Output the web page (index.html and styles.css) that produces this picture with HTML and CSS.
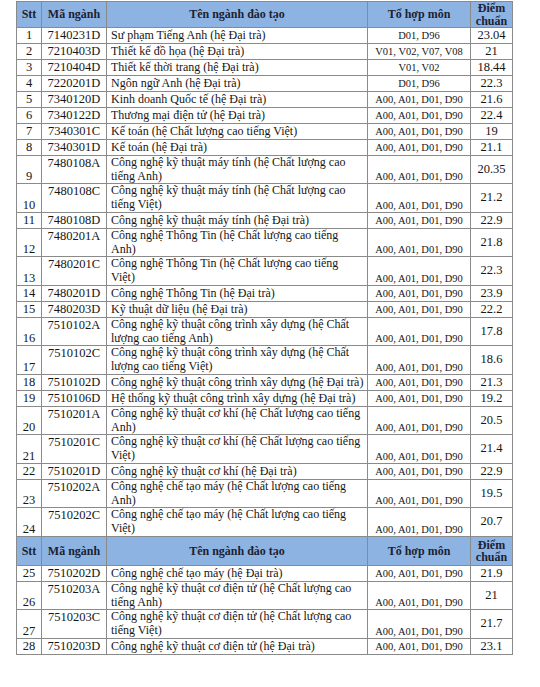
FILE: index.html
```html
<!DOCTYPE html>
<html lang="vi">
<head>
<meta charset="utf-8">
<title>Điểm chuẩn</title>
<link rel="stylesheet" href="styles.css">
</head>
<body>
<div class="wrap">
<table class="tbl">
<colgroup>
<col class="c-stt"><col class="c-code"><col class="c-name"><col class="c-combo"><col class="c-score">
</colgroup>
<tbody>
<tr class="h h1"><th>Stt</th><th>Mã ngành</th><th>Tên ngành đào tạo</th><th>Tổ hợp môn</th><th>Điểm<br>chuẩn</th></tr>
<tr class="s r1"><td class="stt">1</td><td class="code">7140231D</td><td class="name">Sư phạm Tiếng Anh (hệ Đại trà)</td><td class="combo">D01, D96</td><td class="score">23.04</td></tr>
<tr class="s"><td class="stt">2</td><td class="code">7210403D</td><td class="name">Thiết kế đồ họa (hệ Đại trà)</td><td class="combo">V01, V02, V07, V08</td><td class="score">21</td></tr>
<tr class="s"><td class="stt">3</td><td class="code">7210404D</td><td class="name">Thiết kế thời trang (hệ Đại trà)</td><td class="combo">V01, V02</td><td class="score">18.44</td></tr>
<tr class="s"><td class="stt">4</td><td class="code">7220201D</td><td class="name">Ngôn ngữ Anh (hệ Đại trà)</td><td class="combo">D01, D96</td><td class="score">22.3</td></tr>
<tr class="s"><td class="stt">5</td><td class="code">7340120D</td><td class="name">Kinh doanh Quốc tế (hệ Đại trà)</td><td class="combo">A00, A01, D01, D90</td><td class="score">21.6</td></tr>
<tr class="s"><td class="stt">6</td><td class="code">7340122D</td><td class="name">Thương mại điện tử (hệ Đại trà)</td><td class="combo">A00, A01, D01, D90</td><td class="score">22.4</td></tr>
<tr class="s"><td class="stt">7</td><td class="code">7340301C</td><td class="name">Kế toán (hệ Chất lượng cao tiếng Việt)</td><td class="combo">A00, A01, D01, D90</td><td class="score">19</td></tr>
<tr class="s"><td class="stt">8</td><td class="code">7340301D</td><td class="name">Kế toán (hệ Đại trà)</td><td class="combo">A00, A01, D01, D90</td><td class="score">21.1</td></tr>
<tr class="d da"><td class="stt">9</td><td class="code">7480108A</td><td class="name">Công nghệ kỹ thuật máy tính (hệ Chất lượng cao<br>tiếng Anh)</td><td class="combo">A00, A01, D01, D90</td><td class="score">20.35</td></tr>
<tr class="d db"><td class="stt">10</td><td class="code">7480108C</td><td class="name">Công nghệ kỹ thuật máy tính (hệ Chất lượng cao<br>tiếng Việt)</td><td class="combo">A00, A01, D01, D90</td><td class="score">21.2</td></tr>
<tr class="s"><td class="stt">11</td><td class="code">7480108D</td><td class="name">Công nghệ kỹ thuật máy tính (hệ Đại trà)</td><td class="combo">A00, A01, D01, D90</td><td class="score">22.9</td></tr>
<tr class="d da"><td class="stt">12</td><td class="code">7480201A</td><td class="name">Công nghệ Thông Tin (hệ Chất lượng cao tiếng<br>Anh)</td><td class="combo">A00, A01, D01, D90</td><td class="score">21.8</td></tr>
<tr class="d db"><td class="stt">13</td><td class="code">7480201C</td><td class="name">Công nghệ Thông Tin (hệ Chất lượng cao tiếng<br>Việt)</td><td class="combo">A00, A01, D01, D90</td><td class="score">22.3</td></tr>
<tr class="s"><td class="stt">14</td><td class="code">7480201D</td><td class="name">Công nghệ Thông Tin (hệ Đại trà)</td><td class="combo">A00, A01, D01, D90</td><td class="score">23.9</td></tr>
<tr class="s"><td class="stt">15</td><td class="code">7480203D</td><td class="name">Kỹ thuật dữ liệu (hệ Đại trà)</td><td class="combo">A00, A01, D01, D90</td><td class="score">22.2</td></tr>
<tr class="d da"><td class="stt">16</td><td class="code">7510102A</td><td class="name">Công nghệ kỹ thuật công trình xây dựng (hệ Chất<br>lượng cao tiếng Anh)</td><td class="combo">A00, A01, D01, D90</td><td class="score">17.8</td></tr>
<tr class="d db"><td class="stt">17</td><td class="code">7510102C</td><td class="name">Công nghệ kỹ thuật công trình xây dựng (hệ Chất<br>lượng cao tiếng Việt)</td><td class="combo">A00, A01, D01, D90</td><td class="score">18.6</td></tr>
<tr class="s"><td class="stt">18</td><td class="code">7510102D</td><td class="name">Công nghệ kỹ thuật công trình xây dựng (hệ Đại trà)</td><td class="combo">A00, A01, D01, D90</td><td class="score">21.3</td></tr>
<tr class="s"><td class="stt">19</td><td class="code">7510106D</td><td class="name">Hệ thống kỹ thuật công trình xây dựng (hệ Đại trà)</td><td class="combo">A00, A01, D01, D90</td><td class="score">19.2</td></tr>
<tr class="d da"><td class="stt">20</td><td class="code">7510201A</td><td class="name">Công nghệ kỹ thuật cơ khí (hệ Chất lượng cao tiếng<br>Anh)</td><td class="combo">A00, A01, D01, D90</td><td class="score">20.5</td></tr>
<tr class="d db"><td class="stt">21</td><td class="code">7510201C</td><td class="name">Công nghệ kỹ thuật cơ khí (hệ Chất lượng cao tiếng<br>Việt)</td><td class="combo">A00, A01, D01, D90</td><td class="score">21.4</td></tr>
<tr class="s"><td class="stt">22</td><td class="code">7510201D</td><td class="name">Công nghệ kỹ thuật cơ khí (hệ Đại trà)</td><td class="combo">A00, A01, D01, D90</td><td class="score">22.9</td></tr>
<tr class="d da"><td class="stt">23</td><td class="code">7510202A</td><td class="name">Công nghệ chế tạo máy (hệ Chất lượng cao tiếng<br>Anh)</td><td class="combo">A00, A01, D01, D90</td><td class="score">19.5</td></tr>
<tr class="d db"><td class="stt">24</td><td class="code">7510202C</td><td class="name">Công nghệ chế tạo máy (hệ Chất lượng cao tiếng<br>Việt)</td><td class="combo">A00, A01, D01, D90</td><td class="score">20.7</td></tr>
<tr class="h h2"><th>Stt</th><th>Mã ngành</th><th>Tên ngành đào tạo</th><th>Tổ hợp môn</th><th>Điểm<br>chuẩn</th></tr>
<tr class="s"><td class="stt">25</td><td class="code">7510202D</td><td class="name">Công nghệ chế tạo máy (hệ Đại trà)</td><td class="combo">A00, A01, D01, D90</td><td class="score">21.9</td></tr>
<tr class="d da"><td class="stt">26</td><td class="code">7510203A</td><td class="name">Công nghệ kỹ thuật cơ điện tử (hệ Chất lượng cao<br>tiếng Anh)</td><td class="combo">A00, A01, D01, D90</td><td class="score">21</td></tr>
<tr class="d db"><td class="stt">27</td><td class="code">7510203C</td><td class="name">Công nghệ kỹ thuật cơ điện tử (hệ Chất lượng cao<br>tiếng Việt)</td><td class="combo">A00, A01, D01, D90</td><td class="score">21.7</td></tr>
<tr class="s"><td class="stt">28</td><td class="code">7510203D</td><td class="name">Công nghệ kỹ thuật cơ điện tử (hệ Đại trà)</td><td class="combo">A00, A01, D01, D90</td><td class="score">23.1</td></tr>
</tbody>
</table>
</div>
</body>
</html>
```
FILE: styles.css
```css
html, body {
  margin: 0;
  padding: 0;
  background: #ffffff;
}
body {
  font-family: "Liberation Serif", "Times New Roman", serif;
  color: #161616;
}
.wrap {
  padding: 1px 0 0 16px;
}
.tbl {
  border-collapse: collapse;
  table-layout: fixed;
  width: 496px;
  border: 1px solid #666;
}
.c-stt { width: 25px; }
.c-code { width: 65px; }
.c-name { width: 261px; }
.c-combo { width: 103px; }
.c-score { width: 42px; }

.tbl td, .tbl th {
  border: 1px solid #8a8a8a;
  padding: 0;
  font-size: 12.5px;
  line-height: 13.5px;
  white-space: nowrap;
  overflow: hidden;
}
.tbl th {
  background: #8db3e2;
  color: #1b2233;
  font-weight: bold;
  font-size: 12px;
  text-align: center;
  vertical-align: middle;
  line-height: 12.5px;
}
.h1 { height: 26px; }
.h2 { height: 29px; }
.s { height: 16px; }
.da { height: 28px; }
.db { height: 29px; }

.stt { text-align: center; vertical-align: bottom; }
.code { text-align: center; vertical-align: top; }
.name { text-align: left; vertical-align: top; padding-left: 4px !important; font-size: 12px !important; }
.combo { text-align: center; vertical-align: bottom; font-size: 10.5px !important; }
.score { text-align: center; vertical-align: middle; }
.s td { vertical-align: middle; }
.d .code { padding-top: 1px; }
```
